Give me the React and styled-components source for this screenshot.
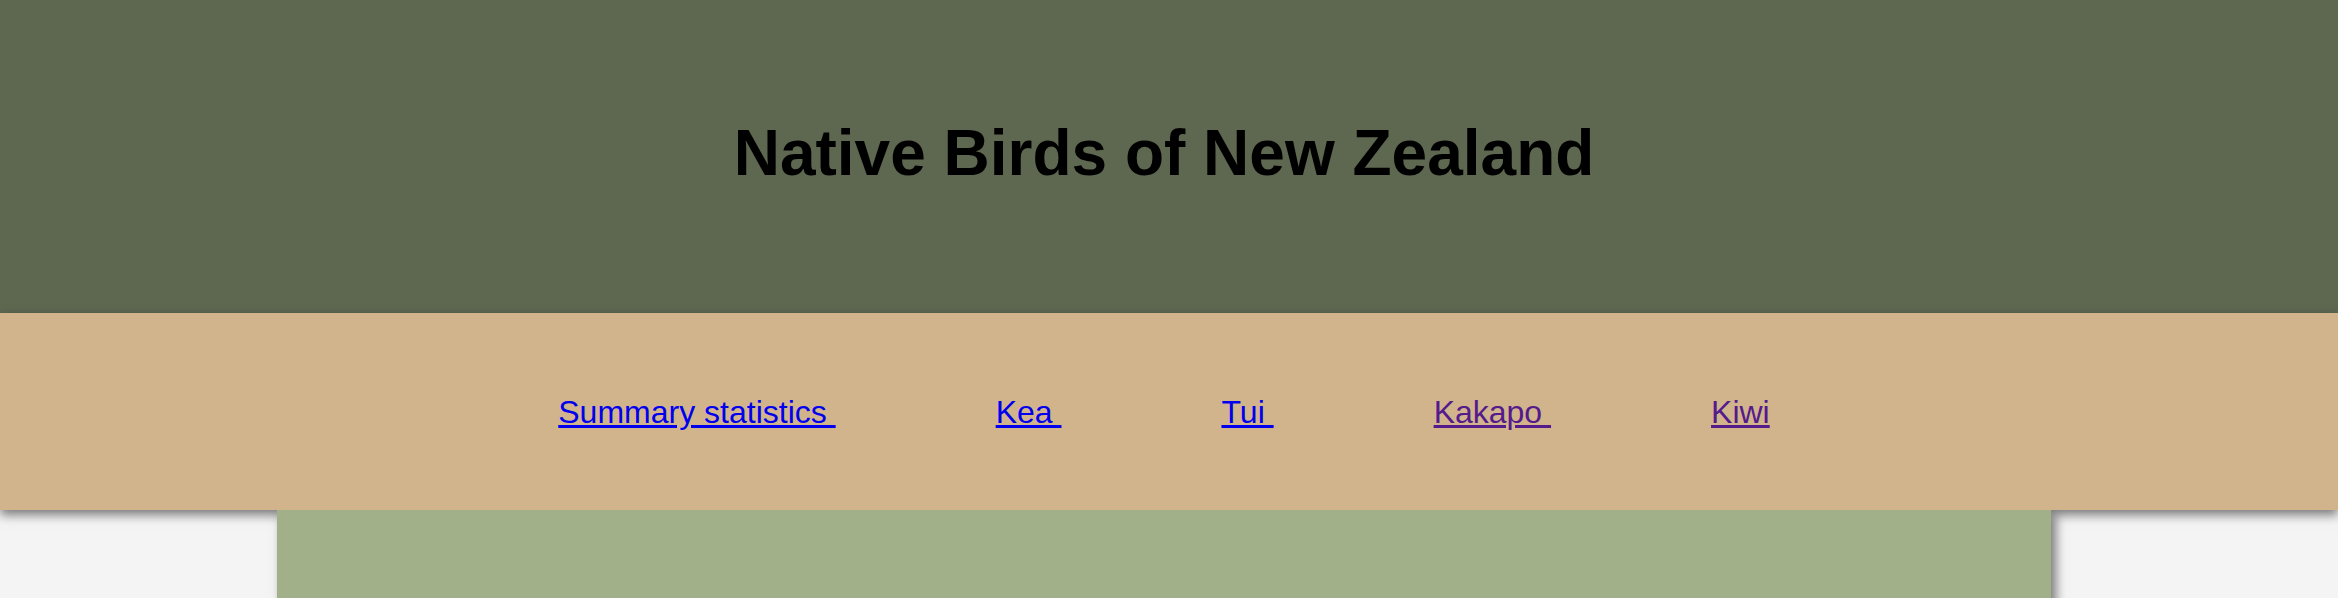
import styled, { createGlobalStyle } from "styled-components";

const GlobalStyle = createGlobalStyle`
  html, body {
    margin: 0;
    padding: 0;
    overflow: hidden;
    background: #f4f4f4;
    font-family: "Liberation Sans", Arial, sans-serif;
  }
`;

const Header = styled.header`
  background: #5e6750;
  height: 313px;
  padding-right: 10px;
  box-sizing: border-box;
  display: flex;
  align-items: center;
  justify-content: center;

  h1 {
    margin: -7px 0 0;
    font-size: 64px;
    line-height: 74px;
    font-weight: 700;
    color: #000;
  }
`;

const Nav = styled.nav`
  background: #d2b48c;
  height: 197px;
  padding: 81px 10px 0 0;
  box-sizing: border-box;
  text-align: center;
  font-size: 32px;
  line-height: 37px;
  box-shadow: 0 5px 10px rgba(0, 0, 0, 0.5);
`;

const NavLink = styled.a`
  color: ${(p) => (p.$visited ? "#551a8b" : "#0000ee")};
  text-decoration: underline;

  & + & {
    margin-left: 160px;
  }
`;

const Content = styled.div`
  height: 88px;
  overflow: hidden;
`;

const Main = styled.main`
  margin-left: 277px;
  width: 1774px;
  height: 400px;
  background: #a2b08a;
  box-shadow: 5px 5px 10px rgba(0, 0, 0, 0.5);
`;

const links = [
  { label: "Summary statistics ", visited: false },
  { label: "Kea ", visited: false },
  { label: "Tui ", visited: false },
  { label: "Kakapo ", visited: true },
  { label: "Kiwi", visited: true },
];

const App = () => (
  <>
    <GlobalStyle />
    <Header>
      <h1>Native Birds of New Zealand</h1>
    </Header>
    <Nav>
      {links.map((l) => (
        <NavLink key={l.label} href="#" $visited={l.visited}>
          {l.label}
        </NavLink>
      ))}
    </Nav>
    <Content>
      <Main />
    </Content>
  </>
);

export default App;
